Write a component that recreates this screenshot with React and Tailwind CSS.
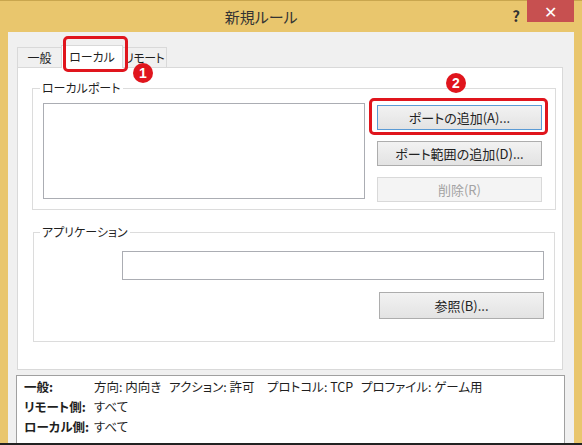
import React from "react";

function Btn({ children, def, disabled }) {
  return (
    <div
      className={
        "w-[165px] h-[25px] flex items-center justify-center text-[13px] border " +
        (disabled
          ? "border-[#d9d9d9] bg-[#f4f4f4] text-[#a3a3a3]"
          : def
          ? "border-[#5b9bd5] bg-gradient-to-b from-[#f2f2f2] to-[#e3e3e3] text-[#222]"
          : "border-[#adadad] bg-gradient-to-b from-[#f2f2f2] to-[#e3e3e3] text-[#222]")
      }
    >
      {children}
    </div>
  );
}

function Badge({ n, className }) {
  return (
    <div
      className={
        "absolute w-[20px] h-[20px] rounded-full bg-[#e0151d] text-white text-[14px] font-bold flex items-center justify-center leading-none font-['Liberation_Sans',sans-serif] " +
        className
      }
    >
      {n}
    </div>
  );
}

export default function App() {
  return (
    <div className="w-[582px] h-[445px] bg-[#e9c66d] relative overflow-hidden font-['Noto_Sans_CJK_JP',sans-serif] [font-feature-settings:'palt'] text-[#1f1f1f] border-b-2 border-[#222]">
      {/* title bar */}
      <div className="h-[32px] flex items-start relative border-t border-[#c9a64e]">
        <div className="flex-1 text-center text-[15px] text-[#333] pt-[5px] pl-[10px]">新規ルール</div>
        <div className="text-[15px] font-bold text-[#333] pt-[4px] mr-[7px]">?</div>
        <div className="w-[47px] h-[22px] bg-[#c75050] text-white flex items-center justify-center text-[16px] mr-[8px] -mt-px">
          ✕
        </div>
      </div>

      {/* client area */}
      <div className="mx-[8px] h-[411px] bg-[#f0f0f0] pt-[13px]">
        {/* tabs */}
        <div className="flex items-end pl-[9px] h-[22px] relative z-10 whitespace-nowrap">
          <div className="w-[45px] h-[20px] border border-b-0 border-[#d9d9d9] bg-[#f0f0f0] text-[12px] flex items-center justify-center">
            一般
          </div>
          <div className="w-[62px] h-[23px] -mb-px border border-b-0 border-[#d9d9d9] bg-white text-[12px] flex items-center justify-center -ml-px">
            ローカル
          </div>
          <div className="w-[44px] h-[20px] border border-b-0 border-l-0 border-[#d9d9d9] bg-[#f0f0f0] text-[12px] flex items-center justify-start pl-px tracking-[-0.5px]">
            リモート
          </div>
        </div>

        {/* tab page */}
        <div className="ml-[9px] w-[546px] h-[303px] border border-[#d9d9d9] bg-white pt-[20px] pl-[14px]">
          {/* local port group */}
          <div className="relative w-[524px] h-[122px] border border-[#dcdcdc] flex pl-[10px] pt-[14px]">
            <div className="absolute -top-[9px] left-[7px] bg-white px-[2px] text-[12px] leading-[16px]">ローカルポート</div>
            <div className="w-[322px] h-[96px] border border-[#abadb3] bg-white"></div>
            <div className="ml-[12px] pt-[2px] flex flex-col gap-[11px]">
              <Btn def>ポートの追加(A)...</Btn>
              <Btn>ポート範囲の追加(D)...</Btn>
              <Btn disabled>削除(R)</Btn>
            </div>
          </div>

          {/* application group */}
          <div className="relative mt-[22px] ml-px w-[522px] h-[110px] border border-[#dcdcdc] flex flex-col items-end pr-[10px] pt-[18px]">
            <div className="absolute -top-[9px] left-[6px] bg-white px-[2px] text-[12px] leading-[16px]">アプリケーション</div>
            <div className="w-[422px] h-[29px] border border-[#abadb3] bg-white"></div>
            <div className="mt-[12px]">
              <div className="w-[165px] h-[27px] flex items-center justify-center text-[13px] border border-[#adadad] bg-gradient-to-b from-[#f2f2f2] to-[#e3e3e3] text-[#222]">
                参照(B)...
              </div>
            </div>
          </div>
        </div>

        {/* summary */}
        <div className="ml-[8px] mt-[5px] w-[549px] h-[80px] border border-[#a0a0a0] bg-white pl-[7px] pt-px text-[12.5px] leading-[20px]">
          <div className="flex">
            <div className="w-[70px] font-bold">一般:</div>
            <div className="flex">
              <span className="w-[75px]">方向: 内向き</span>
              <span className="w-[98px]">アクション: 許可</span>
              <span className="w-[94px]">プロトコル: TCP</span>
              <span>プロファイル: ゲーム用</span>
            </div>
          </div>
          <div className="flex">
            <div className="w-[70px] font-bold">リモート側:</div>
            <div>すべて</div>
          </div>
          <div className="flex">
            <div className="w-[70px] font-bold">ローカル側:</div>
            <div>すべて</div>
          </div>
        </div>
      </div>

      {/* annotations */}
      <div className="absolute left-[63px] top-[36px] w-[65px] h-[36px] border-[3px] border-[#e0151d] rounded-[5px] z-20"></div>
      <Badge n="1" className="left-[133px] top-[63px] z-20" />
      <div className="absolute left-[369px] top-[98px] w-[179px] h-[37px] border-[3px] border-[#e0151d] rounded-[5px] z-20"></div>
      <Badge n="2" className="left-[446px] top-[73px] z-20" />
    </div>
  );
}
